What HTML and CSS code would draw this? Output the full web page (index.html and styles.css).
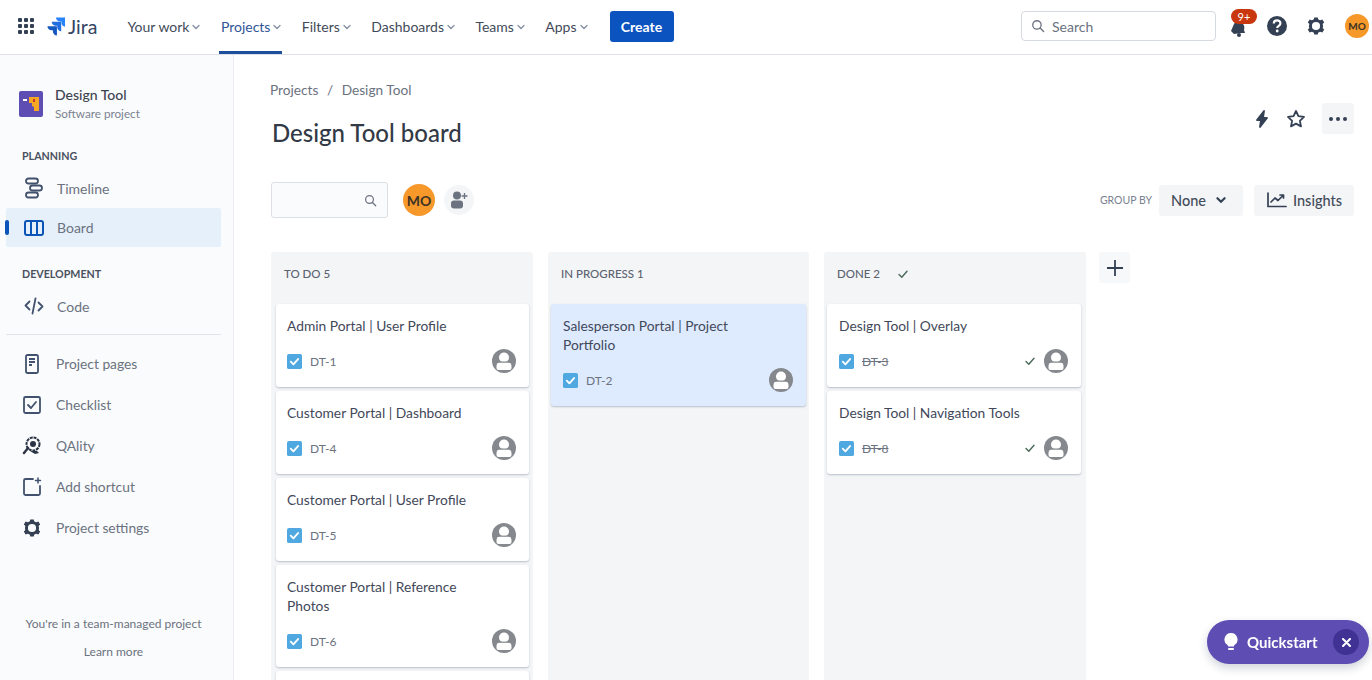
FILE: index.html
```html
<!DOCTYPE html>
<html lang="en">
<head>
    <meta charset="UTF-8">
    <meta name="viewport" content="width=device-width, initial-scale=1.0">
    <title>Design Tool board</title>
    <link rel="stylesheet" href="styles.css">
</head>
<body>
    <svg class="sprites" width="0" height="0">
        <symbol id="i-chevron" viewBox="0 0 10 10"><path d="M2 3.500l3 3 3-3" fill="none" stroke="currentColor" stroke-width="1.4" stroke-linecap="round"/></symbol>
        <symbol id="i-search" viewBox="0 0 16 16"><circle cx="6.8" cy="6.8" r="4.8" fill="none" stroke="currentColor" stroke-width="1.5"/><path d="M10.4 10.4l4 4" stroke="currentColor" stroke-width="1.6" stroke-linecap="round"/></symbol>
        <symbol id="i-gear" viewBox="0 0 20 20"><circle cx="10" cy="10" r="5.6" fill="none" stroke="currentColor" stroke-width="3"/><path d="M8.2 1.5h3.6l.5 3h-4.600zM8.2 18.500h3.600l.5-3H7.700zM1.800 6.600l1.800-3.100 2.800 1.100-2.300 4zM18.200 13.400l-1.800 3.100-2.800-1.100 2.300-4zM3.600 16.500l-1.800-3.100 2.300-2 2.300 4zM16.400 3.500l1.800 3.100-2.300 2-2.300-4z" fill="currentColor"/></symbol>
        <symbol id="i-user" viewBox="0 0 24 24"><circle cx="12" cy="12" r="12" fill="#85888d"/><circle cx="12" cy="8.500" r="5" fill="#fff"/><path d="M4.500 17c0-2.500 2-4 4-4h7c2 0 4 1.500 4 4v2a2 2 0 0 1-2 2h-11a2 2 0 0 1-2-2z" fill="#fff"/><path d="M4 13.200h16" stroke="#85888d" stroke-width="1.200"/></symbol>
        <symbol id="i-story" viewBox="0 0 16 16"><rect width="16" height="16" rx="2" fill="#4fa8e0"/><path d="M4 8.200l2.800 2.800 5-5.600" fill="none" stroke="#fff" stroke-width="2" stroke-linecap="round" stroke-linejoin="round"/></symbol>
        <symbol id="i-check" viewBox="0 0 12 12"><path d="M2 6.500l2.800 2.800L10 3.200" fill="none" stroke="currentColor" stroke-width="1.400" stroke-linecap="round" stroke-linejoin="round"/></symbol>
    </svg>

    <header class="topbar">
        <svg class="apps-icon" width="18" height="18" viewBox="0 0 18 18" fill="#344054">
            <rect x="1" y="1" width="4" height="4" rx="1"/><rect x="7" y="1" width="4" height="4" rx="1"/><rect x="13" y="1" width="4" height="4" rx="1"/>
            <rect x="1" y="7" width="4" height="4" rx="1"/><rect x="7" y="7" width="4" height="4" rx="1"/><rect x="13" y="7" width="4" height="4" rx="1"/>
            <rect x="1" y="13" width="4" height="4" rx="1"/><rect x="7" y="13" width="4" height="4" rx="1"/><rect x="13" y="13" width="4" height="4" rx="1"/>
        </svg>
        <div class="logo">
            <svg width="19" height="20" viewBox="0 0 20 20" fill="#2684ff">
                <path d="M19 1h-8.500c0 2.400 1.900 4.200 4.200 4.200h1.600v1.500c0 2.300 1.900 4.200 4.200 4.200V2a1 1 0 0 0-1.500-1z"/>
                <path d="M14.500 5.600H6c0 2.400 1.900 4.200 4.200 4.200h1.600v1.500c0 2.300 1.900 4.200 4.200 4.200V6.600a1 1 0 0 0-1.500-1z" fill="#1f6fe0"/>
                <path d="M10 10.200H1.500c0 2.400 1.900 4.200 4.200 4.200h1.600v1.500c0 2.300 1.900 4.200 4.200 4.200v-8.900a1 1 0 0 0-1.500-1z" fill="#1558c0"/>
            </svg>
            <span>Jira</span>
        </div>
        <nav class="topnav">
            <a class="topnav-item">Your work <svg class="chev" width="10" height="10"><use href="#i-chevron"/></svg></a>
            <a class="topnav-item active">Projects <svg class="chev" width="10" height="10"><use href="#i-chevron"/></svg></a>
            <a class="topnav-item">Filters <svg class="chev" width="10" height="10"><use href="#i-chevron"/></svg></a>
            <a class="topnav-item">Dashboards <svg class="chev" width="10" height="10"><use href="#i-chevron"/></svg></a>
            <a class="topnav-item">Teams <svg class="chev" width="10" height="10"><use href="#i-chevron"/></svg></a>
            <a class="topnav-item">Apps <svg class="chev" width="10" height="10"><use href="#i-chevron"/></svg></a>
        </nav>
        <button class="create-btn">Create</button>

        <div class="topbar-right">
            <div class="top-search">
                <svg width="14" height="14" class="top-search-icon"><use href="#i-search"/></svg>
                <span>Search</span>
            </div>
            <div class="bell">
                <svg width="20" height="20" viewBox="0 0 20 20" fill="#344054"><path d="M3 13l3-7c1-2.500 5-3.500 7-2l2 2c1.500 1.500 1.500 4 1 6l1 3-4 0-7 1z"/><circle cx="11" cy="17" r="2"/></svg>
                <span class="badge">9+</span>
            </div>
            <svg class="help" width="22" height="22" viewBox="0 0 22 22"><circle cx="11" cy="11" r="10" fill="#344054"/><path d="M7.800 8.600c0-4.200 6.600-4.200 6.600-.2 0 2.400-3.200 2.400-3.200 4.600" fill="none" stroke="#fff" stroke-width="2.200"/><circle cx="11.200" cy="16" r="1.400" fill="#fff"/></svg>
            <svg class="gear" width="20" height="20"><use href="#i-gear"/></svg>
            <div class="avatar avatar-small">MO</div>
        </div>
    </header>

    <div class="layout">
        <aside class="sidebar">
            <div class="project">
                <svg width="24" height="26" viewBox="0 0 24 26">
                    <rect width="24" height="26" rx="2" fill="#5e4db2"/>
                    <path d="M10 6h10v14h-5v-4l-2-1v-3h-3z" fill="#f5a623"/>
                    <rect x="4" y="8" width="4" height="2" fill="#fff"/>
                    <rect x="14" y="8" width="2" height="3" fill="#c0392b"/>
                </svg>
                <div>
                    <div class="project-name">Design Tool</div>
                    <div class="project-type">Software project</div>
                </div>
            </div>

            <div class="side-title">PLANNING</div>
            <a class="side-item side-item-first">
                <svg width="20" height="22" viewBox="0 0 20 22" fill="none" stroke="#42526e" stroke-width="1.800"><rect x="2" y="1.500" width="12" height="5" rx="2.500"/><rect x="6" y="8.500" width="12" height="5" rx="2.500"/><rect x="2" y="15.500" width="12" height="5" rx="2.500"/></svg>
                <span class="side-label">Timeline</span>
            </a>
            <a class="side-item selected">
                <svg width="20" height="16" viewBox="0 0 20 16" fill="none" stroke="#0c55b8" stroke-width="2"><rect x="1" y="1" width="18" height="14" rx="2"/><path d="M7 1v14M13 1v14"/></svg>
                <span class="side-label">Board</span>
            </a>

            <div class="side-title side-title-dev">DEVELOPMENT</div>
            <a class="side-item">
                <svg width="20" height="18" viewBox="0 0 20 18" fill="none" stroke="#42526e" stroke-width="1.800" stroke-linecap="round" stroke-linejoin="round"><path d="M5.500 4.500L1.500 8.500l4 4M14.500 5.500l4 4-4 4M11.500 1.500l-3 15"/></svg>
                <span class="side-label">Code</span>
            </a>

            <div class="side-divider"></div>

            <div class="side-links">
                <a class="side-link">
                    <svg width="20" height="20" viewBox="0 0 20 20" fill="none" stroke="#42526e" stroke-width="1.800"><rect x="4" y="1" width="12" height="18" rx="1.500"/><path d="M7 5h6M7 8h6M7 11h3"/></svg>
                    <span>Project pages</span>
                </a>
                <a class="side-link">
                    <svg width="20" height="20" viewBox="0 0 20 20" fill="none" stroke="#42526e" stroke-width="1.800"><rect x="2" y="2" width="16" height="16" rx="1.500"/><path d="M6 10l3 3 5-6" stroke-linecap="round" stroke-linejoin="round"/></svg>
                    <span>Checklist</span>
                </a>
                <a class="side-link">
                    <svg width="20" height="20" viewBox="0 0 20 20"><circle cx="11" cy="8" r="6.500" fill="none" stroke="#2b3445" stroke-width="2" stroke-dasharray="3 .8"/><circle cx="11" cy="8" r="3" fill="#2b3445"/><path d="M6 12l-4 5" stroke="#2b3445" stroke-width="2.400" stroke-linecap="round"/><path d="M8 15l7 0 2 2-4 1z" fill="#2b3445"/></svg>
                    <span>QAlity</span>
                </a>
                <a class="side-link">
                    <svg width="20" height="20" viewBox="0 0 20 20" fill="none" stroke="#42526e" stroke-width="1.800" stroke-linecap="round"><path d="M11 2H3.500A1.500 1.500 0 0 0 2 3.500v13A1.500 1.500 0 0 0 3.500 18h13a1.500 1.500 0 0 0 1.500-1.500V9"/><path d="M16 1v5M13.500 3.500h5" stroke-width="1.500"/></svg>
                    <span>Add shortcut</span>
                </a>
                <a class="side-link">
                    <svg width="20" height="20" class="side-gear"><use href="#i-gear"/></svg>
                    <span>Project settings</span>
                </a>
            </div>

            <div class="side-foot">
                <p>You're in a team-managed project</p>
                <p>Learn more</p>
            </div>
        </aside>

        <main class="content">
            <div class="breadcrumb">
                <span>Projects</span><span class="slash">/</span><span>Design Tool</span>
            </div>
            <div class="title-row">
                <h1>Design Tool board</h1>
                <div class="title-actions">
                    <svg width="16" height="18" viewBox="0 0 16 18" fill="none" stroke="#344054" stroke-width="1.800" stroke-linejoin="round"><path d="M10 1L3 10h4l-1 7 7-9H9z" fill="#344054"/></svg>
                    <svg width="20" height="20" viewBox="0 0 20 20" fill="none" stroke="#344054" stroke-width="1.800" stroke-linejoin="round"><path d="M10 2l2.400 5.200 5.600.7-4.100 3.900 1.100 5.600-5-2.800-5 2.800 1.100-5.600L2 7.900l5.600-.7z"/></svg>
                    <div class="more-btn"><i></i><i></i><i></i></div>
                </div>
            </div>

            <div class="toolbar">
                <div class="board-search">
                    <svg width="13" height="13"><use href="#i-search"/></svg>
                </div>
                <div class="avatar">MO</div>
                <div class="add-user">
                    <svg width="20" height="20" viewBox="0 0 20 20" fill="#6b7280"><circle cx="8" cy="5.500" r="4"/><rect x="2" y="10.500" width="12" height="8" rx="3"/><path d="M15.500 3v6M12.500 6h6" stroke="#6b7280" stroke-width="1.400"/></svg>
                </div>
                <div class="toolbar-right">
                    <span class="group-label">GROUP BY</span>
                    <button class="grey-btn none-btn">None <svg width="12" height="12" viewBox="0 0 10 10"><path d="M2 3.500l3 3 3-3" fill="none" stroke="#344054" stroke-width="1.800" stroke-linecap="round"/></svg></button>
                    <button class="grey-btn insights-btn">
                        <svg width="20" height="16" viewBox="0 0 20 16" fill="none" stroke="#344054" stroke-width="1.700" stroke-linecap="round" stroke-linejoin="round"><path d="M1 1v13.500h18"/><path d="M4 10l4-4 3 2.500 5-5M13 3h3.500v3"/></svg>
                        Insights
                    </button>
                </div>
            </div>

            <div class="board">
                <section class="column col-todo">
                    <h2 class="col-title">TO DO 5</h2>
                    <article class="card">
                        <p class="card-title">Admin Portal | User Profile</p>
                        <div class="card-meta"><svg width="15" height="15"><use href="#i-story"/></svg><span class="key">DT-1</span><svg class="assignee" width="24" height="24"><use href="#i-user"/></svg></div>
                    </article>
                    <article class="card">
                        <p class="card-title">Customer Portal | Dashboard</p>
                        <div class="card-meta"><svg width="15" height="15"><use href="#i-story"/></svg><span class="key">DT-4</span><svg class="assignee" width="24" height="24"><use href="#i-user"/></svg></div>
                    </article>
                    <article class="card">
                        <p class="card-title">Customer Portal | User Profile</p>
                        <div class="card-meta"><svg width="15" height="15"><use href="#i-story"/></svg><span class="key">DT-5</span><svg class="assignee" width="24" height="24"><use href="#i-user"/></svg></div>
                    </article>
                    <article class="card card-tall">
                        <p class="card-title">Customer Portal | Reference Photos</p>
                        <div class="card-meta"><svg width="15" height="15"><use href="#i-story"/></svg><span class="key">DT-6</span><svg class="assignee" width="24" height="24"><use href="#i-user"/></svg></div>
                    </article>
                    <article class="card"></article>
                </section>

                <section class="column col-progress">
                    <h2 class="col-title">IN PROGRESS 1</h2>
                    <article class="card card-tall card-blue">
                        <p class="card-title">Salesperson Portal | Project Portfolio</p>
                        <div class="card-meta"><svg width="15" height="15"><use href="#i-story"/></svg><span class="key">DT-2</span><svg class="assignee" width="24" height="24"><use href="#i-user"/></svg></div>
                    </article>
                </section>

                <section class="column col-done">
                    <h2 class="col-title">DONE 2 <svg class="col-check" width="12" height="12"><use href="#i-check"/></svg></h2>
                    <article class="card">
                        <p class="card-title">Design Tool | Overlay</p>
                        <div class="card-meta"><svg width="15" height="15"><use href="#i-story"/></svg><span class="key done">DT-3</span><svg class="done-check" width="12" height="12"><use href="#i-check"/></svg><svg width="24" height="24"><use href="#i-user"/></svg></div>
                    </article>
                    <article class="card">
                        <p class="card-title">Design Tool | Navigation Tools</p>
                        <div class="card-meta"><svg width="15" height="15"><use href="#i-story"/></svg><span class="key done">DT-8</span><svg class="done-check" width="12" height="12"><use href="#i-check"/></svg><svg width="24" height="24"><use href="#i-user"/></svg></div>
                    </article>
                </section>

                <button class="add-col">
                    <svg width="18" height="18" viewBox="0 0 18 18" stroke="#344054" stroke-width="1.800"><path d="M9 1v16M1 9h16"/></svg>
                </button>
            </div>
        </main>
    </div>

    <div class="quickstart">
        <svg width="14" height="18" viewBox="0 0 14 18" fill="#fff"><path d="M7 0a6.500 6.500 0 0 0-3.500 12c.5.400.5 1 .5 1.500h6c0-.5 0-1.100.5-1.500A6.500 6.500 0 0 0 7 0z"/><rect x="4" y="15" width="6" height="2" rx="1"/></svg>
        <span>Quickstart</span>
        <div class="qs-close">
            <svg width="9" height="9" viewBox="0 0 9 9" stroke="#fff" stroke-width="2" stroke-linecap="round"><path d="M1 1l7 7M8 1L1 8"/></svg>
        </div>
    </div>
</body>
</html>
```

FILE: styles.css
```css
* {
    box-sizing: border-box;
}

body {
    font-family: Lato, "Open Sans", sans-serif;
    margin: 0;
    height: 680px;
    overflow: hidden;
    background-color: #fff;
    color: #3d4350;
}

.sprites {
    position: absolute;
}

/* Top bar */
.topbar {
    display: flex;
    align-items: center;
    height: 55px;
    padding: 0 0 2px 17px;
    border-bottom: 1px solid #dfe1e6;
}

.logo {
    display: flex;
    align-items: center;
    gap: 3px;
    margin-left: 11px;
    font-size: 19.500px;
    color: #344563;
}

.topnav {
    display: flex;
    align-self: flex-start;
    height: 54px;
    margin-left: 28px;
    gap: 17.400px;
}

.topnav-item {
    display: flex;
    align-items: center;
    gap: 2px;
    padding: 2px 0 0 2px;
    font-size: 14px;
    color: #424b5a;
    white-space: nowrap;
    border-bottom: 3px solid transparent;
}

.topnav-item.active {
    color: #2f5596;
    border-bottom-color: #1d4f9c;
}

.chev {
    color: #8993a4;
}

.create-btn {
    width: 64px;
    height: 31px;
    margin-left: 21px;
    font-family: inherit;
    font-size: 14px;
    font-weight: 700;
    color: #fff;
    background-color: #0b53bf;
    border: none;
    border-radius: 3px;
}

.topbar-right {
    display: flex;
    align-items: center;
    margin-left: auto;
    padding-right: 3px;
}

.top-search {
    display: flex;
    align-items: center;
    gap: 7px;
    width: 195px;
    height: 30px;
    padding-left: 9px;
    font-size: 14px;
    color: #6b7280;
    border: 1px solid #d5d9e0;
    border-radius: 4px;
}

.top-search-icon {
    color: #6b7280;
}

.bell {
    position: relative;
    width: 20px;
    height: 20px;
    margin: 4px 0 0 12px;
}

.badge {
    position: absolute;
    left: 3px;
    top: -9px;
    width: 26px;
    height: 15px;
    font-size: 11px;
    line-height: 15px;
    text-align: center;
    color: #fff;
    background-color: #c9370e;
    border-radius: 8px;
}

.help {
    margin-left: 18px;
}

.gear {
    margin-left: 18px;
    color: #344054;
}

.avatar {
    display: flex;
    align-items: center;
    justify-content: center;
    width: 32px;
    height: 32px;
    font-size: 14px;
    font-weight: 700;
    color: #3b3326;
    background-color: #f6982a;
    border-radius: 50%;
}

.avatar-small {
    width: 24px;
    height: 24px;
    margin-left: 19px;
    font-size: 10px;
}

/* Sidebar */
.layout {
    display: flex;
    height: 625px;
    overflow: hidden;
}

.sidebar {
    display: flex;
    flex-direction: column;
    flex: 0 0 234px;
    padding: 30px 12px 0 6px;
    background-color: #fafbfc;
    border-right: 1px solid #ebecf0;
}

.project {
    display: flex;
    align-items: center;
    gap: 12px;
    margin-left: 13px;
}

.project-name {
    font-size: 14px;
    line-height: 20px;
    font-weight: 500;
    color: #3d4350;
}

.project-type {
    font-size: 11.700px;
    line-height: 17px;
    color: #7a8291;
}

.side-title {
    margin: 26px 0 0 16px;
    font-size: 10.700px;
    line-height: 16px;
    font-weight: 700;
    color: #4a5160;
}

.side-title-dev {
    margin: 19px 0 6px 16px;
}

.side-item {
    display: flex;
    align-items: center;
    gap: 13px;
    height: 38px;
    padding: 0 0 2px 18px;
    font-size: 14px;
    color: #6b7280;
}

.side-item-first {
    margin-top: 6px;
}

.side-item.selected {
    position: relative;
    height: 39px;
    padding-bottom: 0;
    background-color: #e6f0fb;
    border-radius: 2px;
}

.side-item.selected::before {
    content: "";
    position: absolute;
    left: -1px;
    top: 12px;
    width: 4px;
    height: 15px;
    background-color: #0c55b8;
    border-radius: 2px;
}

.side-divider {
    height: 1px;
    margin-top: 8px;
    background-color: #e2e4e9;
}

.side-links {
    display: flex;
    flex-direction: column;
    gap: 20px;
    margin-top: 18px;
}

.side-link {
    display: flex;
    align-items: center;
    gap: 14px;
    height: 21px;
    padding-left: 16px;
    font-size: 13.800px;
    color: #6b7280;
}

.side-gear {
    color: #344054;
}

.side-foot {
    margin-top: auto;
    padding-bottom: 9px;
    font-size: 12px;
    text-align: center;
    color: #6b7280;
}

.side-foot p {
    margin: 0 0 11px;
    line-height: 17px;
}

/* Main content */
.content {
    flex: 1;
    min-width: 0;
    padding: 25px 18px 0 37px;
}

.breadcrumb {
    display: flex;
    gap: 8.500px;
    margin-left: -1px;
    font-size: 13.700px;
    line-height: 20px;
    color: #6b7280;
}

.title-row {
    display: flex;
    align-items: center;
    justify-content: space-between;
    margin-top: 14px;
    height: 36px;
}

h1 {
    margin: 0 0 0 1px;
    font-size: 24px;
    font-weight: 500;
    color: #333a47;
}

.title-actions {
    display: flex;
    align-items: center;
    gap: 16px;
    margin-top: -27px;
}

.more-btn {
    display: flex;
    align-items: center;
    justify-content: center;
    gap: 3px;
    width: 32px;
    height: 31px;
    background-color: #f4f5f7;
    border-radius: 3px;
}

.more-btn i {
    width: 4px;
    height: 4px;
    background-color: #344054;
    border-radius: 50%;
}

.toolbar {
    display: flex;
    align-items: center;
    margin-top: 32px;
    height: 36px;
}

.board-search {
    display: flex;
    align-items: center;
    justify-content: flex-end;
    width: 117px;
    height: 36px;
    padding-right: 10px;
    color: #6b7280;
    background-color: #fafbfc;
    border: 1px solid #dcdfe4;
    border-radius: 3px;
}

.toolbar .avatar {
    margin-left: 15px;
}

.add-user {
    display: flex;
    align-items: center;
    justify-content: center;
    width: 30px;
    height: 30px;
    margin-left: 9px;
    background-color: #f4f5f7;
    border-radius: 50%;
}

.toolbar-right {
    display: flex;
    align-items: center;
    margin-left: auto;
}

.group-label {
    font-size: 10.500px;
    color: #7a8291;
    margin-right: 7px;
}

.grey-btn {
    display: flex;
    align-items: center;
    height: 31px;
    font-family: inherit;
    font-size: 14.500px;
    font-weight: 500;
    color: #424b5a;
    background-color: #f4f5f7;
    border: none;
    border-radius: 3px;
}

.none-btn {
    gap: 9px;
    width: 84px;
    padding-left: 12px;
}

.insights-btn {
    gap: 6px;
    width: 100px;
    margin-left: 11px;
    padding-left: 13px;
}

/* Board */
.board {
    display: flex;
    gap: 15px;
    margin-top: 34px;
}

.column {
    display: flex;
    flex-direction: column;
    gap: 4px;
    width: 262px;
    height: 428px;
    overflow: hidden;
    background-color: #f4f5f7;
    border-radius: 3px 3px 0 0;
}

.col-progress {
    width: 261px;
}

.col-title {
    display: flex;
    flex: none;
    align-items: center;
    gap: 17px;
    height: 48px;
    margin: 0;
    padding: 0 0 5px 13px;
    font-size: 11.500px;
    font-weight: 500;
    color: #5b6270;
}

.col-check {
    color: #4a6a5a;
}

.card {
    flex: none;
    height: 83px;
    padding: 12px 13px 0 12px;
    background-color: #fff;
    border-radius: 3px;
    box-shadow: 0 1px 2px rgba(9, 30, 66, 0.25);
}

.col-todo .card {
    margin: 0 4px 0 5px;
    padding-left: 11px;
}

.col-progress .card {
    margin: 0 3px;
}

.col-done .card {
    margin: 0 5px 0 3px;
}

.card-tall {
    height: 102px;
}

.card-tall .card-title {
    max-width: 190px;
}

.card-blue {
    background-color: #deebff;
}

.card-title {
    margin: 0;
    font-size: 13.800px;
    line-height: 19px;
    color: #42485a;
}

.card-meta {
    display: flex;
    align-items: center;
    margin-top: 14px;
    height: 24px;
}

.key {
    margin-left: 8px;
    font-size: 12px;
    color: #6b7280;
}

.key.done {
    text-decoration: line-through;
}

.assignee {
    margin-left: auto;
}

.done-check {
    margin-left: auto;
    margin-right: 8px;
    color: #4a6a5a;
}

.add-col {
    display: flex;
    align-items: center;
    justify-content: center;
    width: 31px;
    height: 31px;
    margin-left: -2px;
    background-color: #f7f8f9;
    border: none;
    border-radius: 3px;
}

/* Floating button, sits over the page */
.quickstart {
    position: fixed;
    left: 1207px;
    top: 620px;
    display: flex;
    align-items: center;
    width: 162px;
    height: 44px;
    padding-left: 17px;
    font-size: 15px;
    font-weight: 700;
    color: #fff;
    background-color: #5e4db2;
    border-radius: 22px;
    box-shadow: 0 4px 10px rgba(9, 30, 66, 0.2);
}

.quickstart span {
    margin-left: 9px;
}

.qs-close {
    display: flex;
    align-items: center;
    justify-content: center;
    width: 26px;
    height: 26px;
    margin-left: auto;
    margin-right: 10px;
    background-color: #403294;
    border-radius: 50%;
}
```
